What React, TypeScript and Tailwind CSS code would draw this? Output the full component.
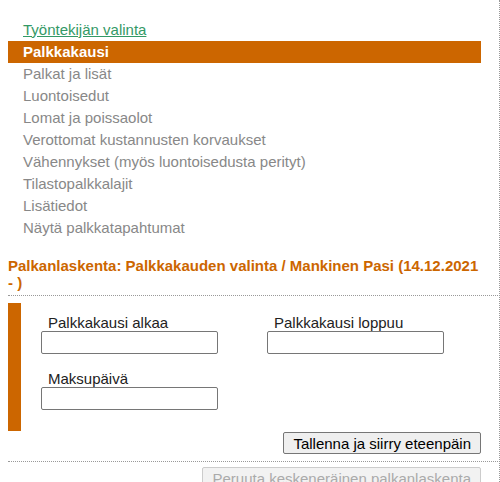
import React from 'react';

const menuItems = [
  'Palkat ja lisät',
  'Luontoisedut',
  'Lomat ja poissaolot',
  'Verottomat kustannusten korvaukset',
  'Vähennykset (myös luontoisedusta perityt)',
  'Tilastopalkkalajit',
  'Lisätiedot',
  'Näytä palkkatapahtumat',
];

const Field: React.FC<{ label: string }> = ({ label }) => (
  <div className="flex flex-col w-[226px] shrink-0">
    <label className="pl-[7px] text-[15px] leading-[17px] text-[#222]">{label}</label>
    <input
      type="text"
      className="w-[177px] h-[23px] border border-[#767676] rounded-[2px] bg-white"
    />
  </div>
);

export default function App() {
  return (
    <div className="w-[500px] h-[482px] overflow-hidden bg-white border-r border-dotted border-[#999] font-['Liberation_Sans',Arial,sans-serif]">
      <div className="pt-[19px] pl-2">
        {/* Menu */}
        <div className="w-[473px] text-[15px]">
          <div className="h-[22px] flex items-center pl-[15px]">
            <a href="#" className="text-[#339966] underline">
              Työntekijän valinta
            </a>
          </div>
          <div className="h-[22px] flex items-center pl-[15px] bg-[#cc6600] text-white font-bold">
            Palkkakausi
          </div>
          {menuItems.map((item) => (
            <div key={item} className="h-[22px] flex items-center pl-[15px] text-[#888]">
              {item}
            </div>
          ))}
        </div>

        {/* Title */}
        <h2 className="w-[473px] mt-[18px] text-[15px] leading-[17px] font-bold text-[#cc6600]">
          Palkanlaskenta: Palkkakauden valinta / Mankinen Pasi (14.12.2021 - )
        </h2>

        <div className="mt-[4px] border-t border-dotted border-[#999] w-[490px]" />

        {/* Form */}
        <div className="mt-[7px] w-[473px] flex">
          <div className="w-[13px] h-[128px] shrink-0 bg-[#cc6600]" />
          <div className="pl-5 pt-[11px] flex flex-col gap-[16px]">
            <div className="flex">
              <Field label="Palkkakausi alkaa" />
              <Field label="Palkkakausi loppuu" />
            </div>
            <Field label="Maksupäivä" />
          </div>
        </div>

        <div className="w-[473px] flex justify-end mt-px">
          <button className="h-[22px] px-[9px] text-[15px] text-black bg-[#efefef] border border-[#767676] rounded-[2px]">
            Tallenna ja siirry eteenpäin
          </button>
        </div>

        <div className="mt-[7px] border-t border-dotted border-[#999] w-[490px]" />

        <div className="w-[473px] flex justify-end mt-[5px]">
          <button
            disabled
            className="h-[22px] px-[9px] text-[15px] text-[#aaa] bg-[#f2f2f2] border border-[#ccc] rounded-[2px]"
          >
            Peruuta keskeneräinen palkanlaskenta
          </button>
        </div>
      </div>
    </div>
  );
}
